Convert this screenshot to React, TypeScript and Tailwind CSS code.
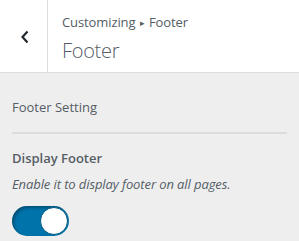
export default function App() {
  return (
    <div className="h-[241px] w-[299px] overflow-hidden bg-[#eeeeee] font-['Open_Sans',sans-serif] text-[#555d66]">
      {/* header */}
      <div className="flex h-[73px] border-b border-[#dddddd] bg-white">
        <button className="flex w-[48px] items-center justify-center border-r border-[#dddddd] pl-[3px] pt-[1px] text-[#23282d]">
          <svg width="10" height="14" viewBox="0 0 10 14" fill="none">
            <path d="M7.5 1.5 2.5 7l5 5.5" stroke="currentColor" strokeWidth="2.2" />
          </svg>
        </button>
        <div className="flex flex-col pl-[14px] pt-[13px]">
          <span className="text-[13px] leading-[18px] tracking-[-0.1px]">
            Customizing <span className="mx-[1px] text-[9px] align-[1px]">▸</span> Footer
          </span>
          <span className="mt-[7px] text-[20px] font-light leading-[24px] tracking-[-0.3px]">
            Footer
          </span>
        </div>
      </div>

      {/* section */}
      <div className="px-[12px] pt-[25px]">
        <div className="text-[13px] font-medium leading-[18px]">Footer Setting</div>
        <div className="mt-[16px] border-t-2 border-[#dcdcdc]" />
        <div className="mt-[15px] text-[13px] font-semibold leading-[18px]">Display Footer</div>
        <div className="mt-[8px] text-[13px] italic leading-[18px] tracking-[-0.1px]">
          Enable it to display footer on all pages.
        </div>
        <div className="mt-[13px] flex h-[30px] w-[57px] items-center justify-end rounded-full bg-[#0073aa] pr-[1px] shadow-[inset_2px_2px_3px_rgba(0,0,0,0.3)]">
          <div className="h-[28px] w-[28px] rounded-full border border-[#00587f] bg-white" />
        </div>
      </div>
    </div>
  );
}
